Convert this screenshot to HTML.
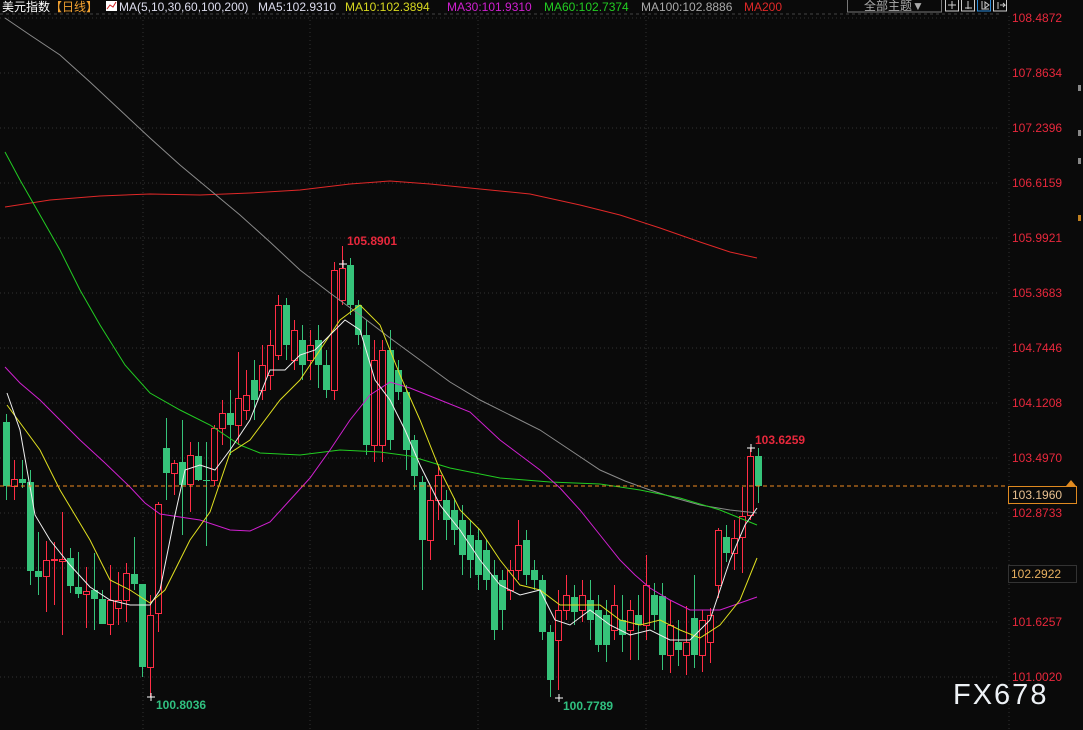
<!DOCTYPE html>
<html><head><meta charset="utf-8"><style>
html,body{margin:0;padding:0;background:#0a0a0a;width:1083px;height:730px;overflow:hidden}
svg{display:block}
text{font-family:"Liberation Sans","Noto Sans CJK SC",sans-serif}
</style></head><body>
<svg id="s" width="1083" height="730" viewBox="0 0 1083 730" xmlns="http://www.w3.org/2000/svg">
<rect width="1083" height="730" fill="#0a0a0a"/>
<g stroke="#333" stroke-dasharray="1,3" stroke-width="1">
<line x1="0" y1="18" x2="1000" y2="18"/><line x1="0" y1="73" x2="1000" y2="73"/><line x1="0" y1="128" x2="1000" y2="128"/><line x1="0" y1="183" x2="1000" y2="183"/><line x1="0" y1="238" x2="1000" y2="238"/><line x1="0" y1="293" x2="1000" y2="293"/><line x1="0" y1="348" x2="1000" y2="348"/><line x1="0" y1="403" x2="1000" y2="403"/><line x1="0" y1="458" x2="1000" y2="458"/><line x1="0" y1="513" x2="1000" y2="513"/><line x1="0" y1="568" x2="1000" y2="568"/><line x1="0" y1="622" x2="1000" y2="622"/><line x1="0" y1="677" x2="1000" y2="677"/>
<line x1="143" y1="16" x2="143" y2="730"/><line x1="310" y1="16" x2="310" y2="730"/><line x1="478" y1="16" x2="478" y2="730"/><line x1="646" y1="16" x2="646" y2="730"/><line x1="1009" y1="16" x2="1009" y2="730"/>
</g>
<line x1="0" y1="14" x2="1000" y2="14" stroke="#444" stroke-dasharray="3,3"/>
<g id="c"></g>
<g fill="none" stroke-width="1">
<polyline stroke="#e02828" points="5,207 50,200 100,196 150,194 200,195 250,193 300,190 350,184 390,181 430,184 480,189 530,194 580,205 620,215 660,228 700,242 730,252 757,258"/>
<polyline stroke="#8a8a8a" points="5,18 30,35 60,55 90,82 120,110 150,138 180,165 210,190 240,215 270,242 300,270 330,293 360,315 390,338 420,360 450,382 480,400 510,415 540,430 570,450 600,470 625,481 650,490 675,498 700,505 730,510 757,513"/>
<polyline stroke="#22cc22" points="5,152 20,180 40,215 60,250 80,290 100,325 125,365 150,393 180,410 210,425 240,445 260,453 300,455 340,450 380,452 410,456 450,468 500,478 550,482 600,484 640,490 680,498 720,510 757,525"/>
<polyline stroke="#d020d0" points="5,367 20,383 40,400 60,420 80,440 105,463 130,487 145,503 160,514 200,520 230,530 250,531 270,522 290,500 310,478 330,450 350,420 370,395 390,382 410,388 440,400 470,412 500,440 520,455 540,470 560,488 580,510 600,535 620,560 635,575 650,588 670,600 690,610 720,610 740,603 757,597"/>
<polyline stroke="#e0e020" points="7,405 40,450 60,490 90,540 110,580 130,590 150,603 165,590 190,540 210,512 230,453 250,440 280,400 300,380 320,350 340,320 360,305 380,325 400,375 420,420 440,470 460,510 480,530 500,560 520,585 540,590 560,605 580,605 600,605 620,620 640,625 660,620 680,630 700,638 720,625 740,600 757,558"/>
<polyline stroke="#f0f0f0" points="7,393 20,430 35,515 50,540 70,565 90,587 110,600 130,605 150,605 160,590 175,515 185,470 200,465 215,470 230,450 250,420 270,370 285,370 300,355 315,350 330,335 345,320 360,330 375,380 390,400 405,430 420,465 440,505 460,530 480,560 500,585 520,595 540,590 555,620 570,625 590,610 610,625 630,635 650,630 670,640 690,640 710,620 730,560 745,525 757,508"/>
</g>
<line x1="0" y1="486" x2="1008" y2="486" stroke="#f08a20" stroke-dasharray="4,3"/>
<g font-size="12" fill="#e8283c">
<text x="1012" y="22">108.4872</text><text x="1012" y="77">107.8634</text><text x="1012" y="132">107.2396</text><text x="1012" y="187">106.6159</text><text x="1012" y="242">105.9921</text><text x="1012" y="297">105.3683</text><text x="1012" y="352">104.7446</text><text x="1012" y="407">104.1208</text><text x="1012" y="462">103.4970</text><text x="1012" y="517">102.8733</text><text x="1012" y="626">101.6257</text><text x="1012" y="681">101.0020</text>
</g>
<rect x="1008.5" y="486.5" width="68" height="17" fill="#0a0a0a" stroke="#e08a20"/>
<text x="1012" y="499" font-size="12" fill="#e8c090">103.1960</text>
<rect x="1008.5" y="565.5" width="68" height="17" fill="#0a0a0a" stroke="#333"/>
<text x="1011" y="578" font-size="12" fill="#e8b060">102.2922</text>
<path d="M1066 486 l5 -6 l5 6z" fill="#e08a20"/>
<g font-size="12" font-weight="bold">
<text x="347" y="245" fill="#e8283c">105.8901</text>
<text x="755" y="444" fill="#e8283c">103.6259</text>
<text x="156" y="709" fill="#30c080">100.8036</text>
<text x="563" y="710" fill="#30c080">100.7789</text>
</g>
<g stroke="#fff"><line x1="147" y1="697" x2="155" y2="697"/><line x1="151" y1="693" x2="151" y2="701"/><line x1="339" y1="264" x2="347" y2="264"/><line x1="343" y1="260" x2="343" y2="268"/><line x1="747" y1="448" x2="755" y2="448"/><line x1="751" y1="444" x2="751" y2="452"/><line x1="555" y1="698" x2="563" y2="698"/><line x1="559" y1="694" x2="559" y2="702"/></g>
<text x="953" y="704" font-size="29" fill="#eef2f6" letter-spacing="2">FX678</text>
<rect x="0" y="0" width="1083" height="13" fill="#0a0a0a"/>
<g font-size="12">
<text x="2" y="11" fill="#fff">美元指数</text>
<text x="50" y="11" fill="#f0a030">【日线】</text>
<rect x="106" y="1" width="11" height="10" fill="#fff"/><path d="M107 9 l3 -4 l3 2 l3 -5" stroke="#d02020" fill="none"/>
<text x="119" y="11" fill="#dde">MA(5,10,30,60,100,200)</text>
<text x="258" y="11" fill="#dde">MA5:102.9310</text>
<text x="345" y="11" fill="#d8d820">MA10:102.3894</text>
<text x="447" y="11" fill="#d020d0">MA30:101.9310</text>
<text x="544" y="11" fill="#22cc22">MA60:102.7374</text>
<text x="641" y="11" fill="#aaa">MA100:102.8886</text>
<text x="744" y="11" fill="#e02828">MA200</text>
</g>
<rect x="847.5" y="-1" width="94" height="13" fill="none" stroke="#777"/>
<text x="864" y="10" font-size="12" fill="#aaa">全部主题▼</text>
<g fill="none" stroke="#ccc"><rect x="945.5" y="-1" width="13" height="12"/><rect x="961.5" y="-1" width="13" height="12"/><rect x="977.5" y="-1" width="13" height="12" stroke="#2a8ad8"/><rect x="993.5" y="-1" width="13" height="12"/>
<path d="M952 1v8M948 5h8M968 1v8M965 8h7M982 1v8h7M985 2l4 3l-4 3z M998 2v7 M1000 5h5l-2 -2M1003 7l2-2"/></g>
<g fill="#888"><rect x="1078" y="85" width="3" height="6"/><rect x="1078" y="130" width="3" height="6"/><rect x="1078" y="158" width="3" height="6"/><rect x="1078" y="215" width="3" height="6" fill="#c08020"/></g>
</svg>
<script>
var d=[
[6,422,486,414,500,'g'],[14,479,486,460,500,'r'],[22,479,483,460,488,'g'],[30,482,571,470,585,'g'],[38,571,577,532,595,'g'],[46,560,576,541,612,'r'],[54,559,560,542,605,'r'],[62,559,561,512,635,'r'],[70,558,586,548,593,'g'],[78,587,594,552,598,'g'],[86,591,594,567,628,'r'],[94,590,599,553,630,'g'],[102,599,624,590,624,'g'],[110,600,624,565,635,'r'],[118,600,608,572,625,'r'],[126,573,600,563,622,'r'],[134,574,584,537,590,'g'],[142,584,667,584,677,'g'],[150,615,667,595,697,'r'],[158,504,613,502,632,'r'],[166,448,473,418,500,'g'],[174,463,473,460,495,'r'],[182,462,485,420,535,'g'],[190,455,484,442,512,'r'],[198,456,480,442,481,'g'],[206,480,481,442,546,'g'],[214,428,480,425,486,'r'],[222,413,428,400,445,'r'],[230,413,425,390,455,'g'],[238,398,425,352,445,'r'],[246,395,410,370,420,'r'],
[254,380,400,360,420,'g'],[262,365,390,345,400,'r'],[270,345,375,330,390,'r'],[278,305,355,295,360,'r'],[286,305,345,298,360,'g'],[294,330,360,320,370,'r'],[302,340,365,325,380,'g'],[310,345,360,330,380,'r'],[318,340,365,325,388,'g'],[326,365,390,350,398,'g'],[334,270,390,262,400,'r'],[342,268,300,246,305,'r'],[350,265,305,258,315,'g'],[358,305,335,300,345,'g'],[366,335,445,320,455,'g'],[374,360,445,340,462,'r'],[382,350,445,340,462,'r'],[390,350,440,330,450,'g'],[398,370,392,360,400,'g'],[406,392,450,385,470,'g'],[414,440,476,435,490,'g'],[422,482,540,476,590,'g'],[430,500,540,485,560,'r'],[438,475,500,466,520,'r'],[446,500,520,490,540,'g'],[454,510,530,498,545,'g'],[462,520,555,505,575,'g'],[470,535,560,520,578,'g'],[478,540,575,528,590,'g'],[486,550,580,540,590,'g'],[494,575,630,560,640,'g'],[502,580,610,570,630,'g'],[510,570,590,560,600,'r'],[518,545,570,520,580,'r'],[526,540,575,530,585,'g'],[534,570,580,560,590,'g'],[542,580,632,575,640,'g'],[550,632,680,625,697,'g'],[558,610,640,590,690,'r'],[566,595,610,575,620,'r'],[574,597,612,585,625,'g'],[582,595,610,580,622,'r'],[590,600,620,580,640,'g'],[598,610,645,595,652,'g'],[606,615,645,600,662,'g'],[614,605,630,585,640,'r'],[622,620,635,595,652,'g'],[630,610,630,600,660,'r'],[638,615,625,595,660,'g'],[646,585,625,555,640,'r'],[654,595,615,583,630,'g'],[662,596,655,583,670,'g'],[670,625,655,600,673,'r'],[678,642,650,620,666,'g'],[686,642,655,606,675,'r'],[694,618,655,575,668,'g'],[702,620,655,610,672,'r'],[710,615,642,608,663,'r'],[718,530,585,528,598,'r'],[726,537,553,525,562,'g'],[734,538,553,520,570,'r'],[742,516,537,487,573,'r'],[750,456,515,448,520,'r'],[758,456,486,448,503,'g']
];
var g=document.getElementById('c'),h='';
d.forEach(function(c){var x=c[0],col=c[5]=='g'?'#36c37a':'#ff2d45';
h+='<line x1="'+(x+0.5)+'" y1="'+c[3]+'" x2="'+(x+0.5)+'" y2="'+c[4]+'" stroke="'+col+'"/>';
var hh=Math.max(1,c[2]-c[1]);
if(c[5]=='g')h+='<rect x="'+(x-3)+'" y="'+c[1]+'" width="7" height="'+hh+'" fill="'+col+'"/>';
else h+='<rect x="'+(x-2.5)+'" y="'+(c[1]+0.5)+'" width="6" height="'+hh+'" fill="#0a0a0a" stroke="'+col+'"/>';});
g.innerHTML=h;
</script>
</body></html>
